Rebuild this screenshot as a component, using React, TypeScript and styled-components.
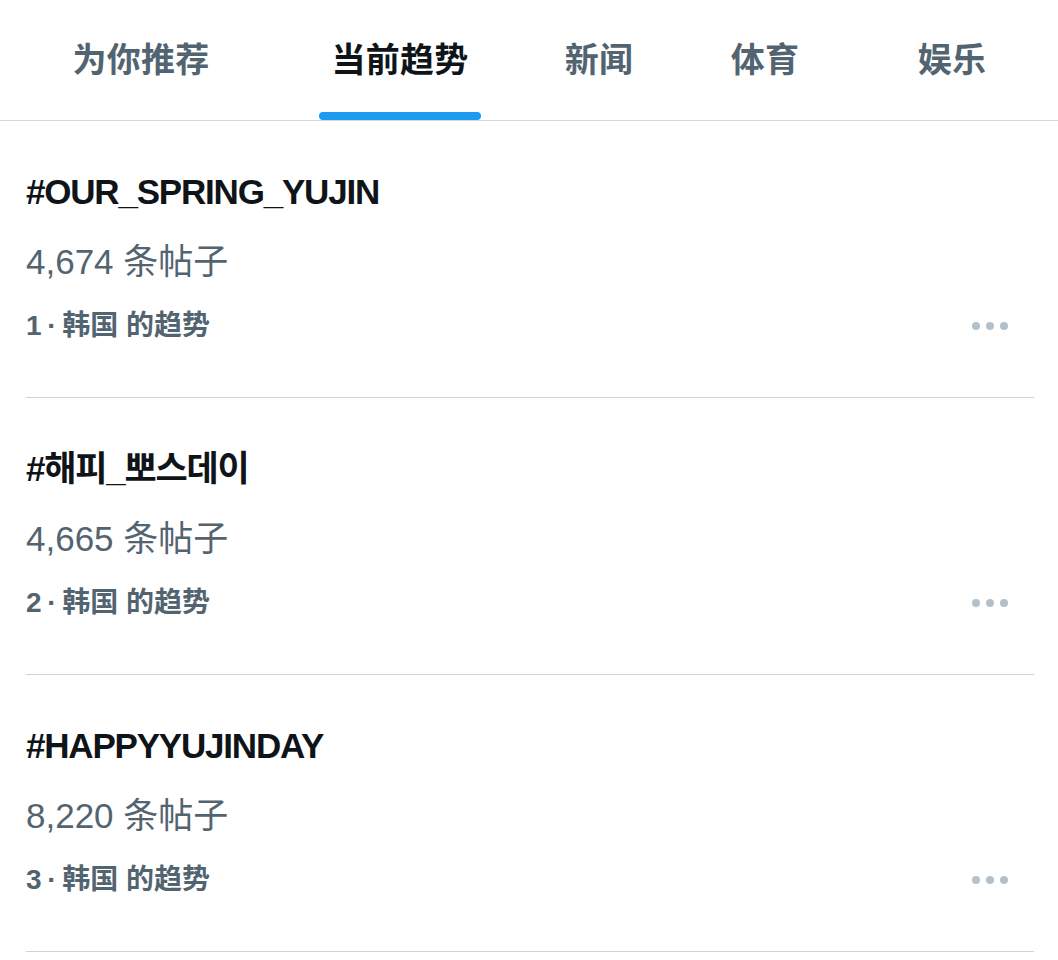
import styled, { createGlobalStyle } from 'styled-components';

const GlobalStyle = createGlobalStyle`
  html, body {
    margin: 0;
    padding: 0;
    background: #ffffff;
  }
  body {
    font-family: 'Liberation Sans', 'Noto Sans CJK SC', sans-serif;
    color: #0f1419;
  }
`;

const Page = styled.div`
  width: 1058px;
  min-height: 960px;
  background: #ffffff;
`;

const TabBar = styled.nav`
  display: flex;
  height: 120px;
  border-bottom: 1px solid #cfd9de;
`;

const Tab = styled.div<{ $width: number; $active?: boolean }>`
  width: ${(p) => p.$width}px;
  flex-shrink: 0;
  display: flex;
  flex-direction: column;
  align-items: center;
  font-size: 34px;
  line-height: 44px;
  font-weight: ${(p) => (p.$active ? 700 : 600)};
  color: ${(p) => (p.$active ? '#0f1419' : '#536471')};
`;

const TabLabel = styled.span`
  padding-top: 38px;
  letter-spacing: 0.3px;
`;

const Indicator = styled.div`
  margin-top: auto;
  width: 162px;
  height: 8px;
  border-radius: 4px;
  background: #1d9bf0;
`;

const TrendRow = styled.div`
  margin: 0 24px 0 26px;
  padding: 49px 0 53px;
  border-bottom: 1px solid #cfd2d6;
  display: flex;
  flex-direction: column;
`;

const Title = styled.div`
  font-family: 'Liberation Sans', 'Noto Sans CJK KR', sans-serif;
  font-size: 35px;
  line-height: 44px;
  font-weight: 700;
  letter-spacing: -1.2px;
  color: #0f1419;
`;

const Count = styled.div`
  margin-top: 26px;
  font-size: 35px;
  line-height: 44px;
  color: #536471;
`;

const Meta = styled.div`
  margin-top: 24px;
  padding-right: 26px;
  display: flex;
  align-items: center;
  justify-content: space-between;
  font-size: 28px;
  line-height: 36px;
  font-weight: 700;
  color: #536471;
`;

const Dots = styled.div`
  display: flex;
  gap: 6px;
`;

const Dot = styled.span`
  width: 8px;
  height: 8px;
  border-radius: 50%;
  background: #b3c0ca;
`;

const tabs = [
  { label: '为你推荐', width: 282 },
  { label: '当前趋势', width: 236, active: true },
  { label: '新闻', width: 162 },
  { label: '体育', width: 170 },
  { label: '娱乐', width: 204 },
];

const trends = [
  { rank: 1, tag: '#OUR_SPRING_YUJIN', posts: '4,674' },
  { rank: 2, tag: '#해피_뽀스데이', posts: '4,665' },
  { rank: 3, tag: '#HAPPYYUJINDAY', posts: '8,220' },
];

export default function App() {
  return (
    <Page>
      <GlobalStyle />
      <TabBar>
        {tabs.map((t) => (
          <Tab key={t.label} $width={t.width} $active={t.active}>
            <TabLabel>{t.label}</TabLabel>
            {t.active && <Indicator />}
          </Tab>
        ))}
      </TabBar>

      {trends.map((t) => (
        <TrendRow key={t.rank}>
          <Title>{t.tag}</Title>
          <Count>{t.posts} 条帖子</Count>
          <Meta>
            <span>{t.rank}{'\u2009·\u2009'}韩国 的趋势</span>
            <Dots>
              <Dot />
              <Dot />
              <Dot />
            </Dots>
          </Meta>
        </TrendRow>
      ))}
    </Page>
  );
}
